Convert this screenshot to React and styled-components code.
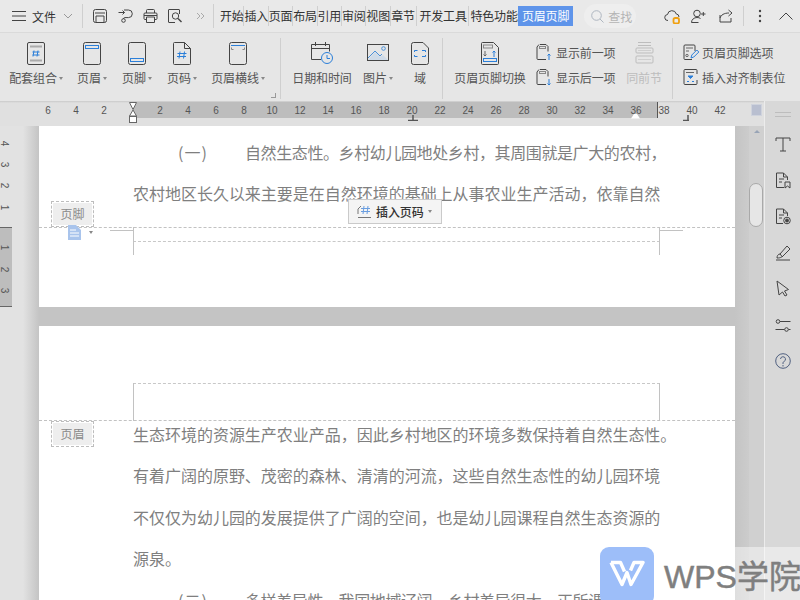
import React from "react";
import styled, { createGlobalStyle } from "styled-components";

const Global = createGlobalStyle`
  html, body { margin: 0; padding: 0; background: #e2e2e2; }
  * { box-sizing: border-box; }
  #root { width: 800px; height: 600px; overflow: hidden; }
`;
const Shell = styled.div`
  position: relative; width: 800px; height: 600px; overflow: hidden; display: flex; flex-direction: column;
  font-family: "Noto Sans CJK SC", "Noto Sans", sans-serif; color: #444; background: #e2e2e2;
`;
/* ---- title bar ---- */
const TitleBar = styled.div`
  height: 33px; flex: none; display: flex; align-items: center; background: #e9e9e9; border-bottom: 1px solid #dadada; padding-left: 12px;
`;
const FileLabel = styled.span`font-size: 12px; color: #333; margin-left: 6px; width: 31px;`;
const VSep = styled.div`width: 1px; height: ${p => p.$h || 24}px; background: ${p => p.$c || "#cfcfcf"}; margin: 0 ${p => p.$mr || 0}px 0 ${p => p.$ml || 0}px; flex: none;`;
const QuickIcon = styled.span`display: flex; width: ${p => p.$w || 25}px; justify-content: center; flex: none;`;
const TabRow = styled.div`display: flex; align-items: center; height: 24px; margin-left: 6px;`;
const Tab = styled.span`
  font-size: 12px; line-height: 20px; color: #333; white-space: nowrap; text-align: center; width: ${p => p.$w}px; flex: none;
  border-right: ${p => p.$sep ? "1px solid #cfcfcf" : "none"};
  letter-spacing: -0.2px;
`;
const ActiveTab = styled.span`
  width: 55px; height: 20px; line-height: 20px; text-align: center; font-size: 12px; color: #fff; background: #5e94ea; flex: none; letter-spacing: -0.2px;
`;
const Search = styled.div`
  display: flex; align-items: center; gap: 4px; width: 52px; height: 24px; margin-left: 11px; border-radius: 12px; background: #eeeeee; padding-left: 7px;
  font-size: 12px; color: #b4b4b4; flex: none; white-space: nowrap;
`;
const RightIcons = styled.div`display: flex; align-items: center; margin-left: 28px;`;

/* ---- ribbon ---- */
const Ribbon = styled.div`
  height: 68px; flex: none; display: flex; align-items: stretch; background: #e6e6e6; padding: 4px 0 2px 7px; position: relative;
`;
const RibbonBtn = styled.div`
  width: ${p => p.$w}px; flex: none; display: flex; flex-direction: column; align-items: center; 
  font-size: 12px; color: ${p => p.$off ? "#bdbdbd" : "#555"}; white-space: nowrap; letter-spacing: -0.1px;
`;
const IconSlot = styled.div`height: 30px; margin-top: 1px; display: flex; align-items: center; justify-content: center;`;
const BtnLabel = styled.div`margin-top: 1px; line-height: 18px; display: flex; align-items: center; gap: 2px;`;
const Caret = styled.i`
  display: inline-block; width: 0; height: 0; border-left: 2.5px solid transparent; border-right: 2.5px solid transparent; border-top: 3px solid #888;
  margin-left: ${p => p.$ml || 0}px; margin-bottom: ${p => p.$mb || 0}px;
`;
const RibbonSep = styled.div`width: 1px; background: #cfcfcf; flex: none; margin: 1px ${p => p.$r || 0}px 0 ${p => p.$l || 0}px;`;
const SmallCol = styled.div`display: flex; flex-direction: column; gap: 5px; padding-top: 5px; width: ${p => p.$w}px; flex: none; margin-left: ${p => p.$ml || 0}px;`;
const SmallItem = styled.div`display: flex; align-items: center; gap: 3px; height: 20px; font-size: 12px; color: #555; white-space: nowrap; letter-spacing: -0.1px;`;
const Launcher = styled.span`position: absolute; left: 271px; top: 60px; width: 5px; height: 5px; border-right: 1px solid #999; border-bottom: 1px solid #999;`;

/* ---- ruler ---- */
const Ruler = styled.div`
  height: 25px; flex: none; position: relative; display: flex; padding-left: 34px; padding-top: 1px;
  background: linear-gradient(#c9c9c9, #e0e0e0 2px, #e0e0e0 100%);
  background-color: #e2e2e2;
`;
const RulerBand = styled.div`
  position: absolute; left: 133px; top: 1px; width: 525px; height: 16px; background: #bdbdbd; border-right: 1px solid #555;
`;
const RulerNum = styled.span`
  position: relative; width: 28px; flex: none; text-align: center; font-size: 10px; line-height: 17px; color: #555;
  font-family: "Liberation Sans", sans-serif;
`;
const Marker = styled.span`position: absolute; left: ${p => p.$x}px; top: ${p => p.$y}px; display: block; line-height: 0;`;
const RulerBtn = styled.span`position: absolute; left: 751px; top: 3px; width: 11px; height: 12px; background: #b9bfd0; border: 1px solid #cfd3dd;`;

/* ---- main ---- */
const Main = styled.div`flex: 1; display: flex; min-height: 0;`;
const VRuler = styled.div`width: 12px; flex: none; display: flex; flex-direction: column; padding-top: 6.500px; background: #e2e2e2; height: 100%;`;
const VCell = styled.div`
  height: 21.400px; flex: none; font-size: 10px; line-height: 21px; text-align: center; color: #555; font-family: "Liberation Sans", sans-serif;
  display: flex; align-items: center; justify-content: center; padding-right: 2px;
  & > span { transform: rotate(90deg); display: block; }
`;
const VDark = styled.div`
  background: #bdbdbd; border-top: 1px solid #666; border-bottom: 1px solid #666; height: 80px; margin-top: 8.900px; padding-top: 9px; flex: none;
`;
const Canvas = styled.div`
  flex: none; width: 737px; display: flex; flex-direction: column; overflow: hidden;
  background: linear-gradient(90deg, #e2e2e2 0, #e2e2e2 11px, #c4c4c4 27px, #c4c4c4 723px, #cccccc 737px);
  padding-left: 27px; padding-right: 14px;
`;
const Page = styled.div`
  position: relative; background: #fff; flex: none; height: ${p => p.$h}px; padding: ${p => p.$pt}px 75px 0 94px;
`;
const PageGap = styled.div`height: 19px; flex: none;`;
const Para = styled.p`
  margin: 0; font-size: 16px; line-height: 41.4px; color: #7f7f7f; white-space: nowrap;
  letter-spacing: ${p => p.$tight ? "-0.4px" : "-0.02px"};
  text-indent: ${p => p.$indent || 0}px;
`;
const Ordinal = styled.span`display: inline-block; width: 67px; text-indent: 0; letter-spacing: 1px;`;
const DashLine = styled.div`position: absolute; left: 0; right: 0; top: ${p => p.$y}px; border-top: 1px dashed #c2c2c2;`;
const InnerDash = styled.div`position: absolute; left: 94px; width: 527px; top: ${p => p.$y}px; border-top: 1px dashed #c8c8c8;`;
const CornerV = styled.div`position: absolute; left: ${p => p.$x}px; top: ${p => p.$y}px; height: ${p => p.$h}px; width: 1px; background: #c2c2c2;`;
const CornerH = styled.div`position: absolute; left: ${p => p.$x}px; top: ${p => p.$y}px; width: 24px; height: 1px; background: #c2c2c2;`;
const ZoneTag = styled.div`
  position: absolute; left: 12px; top: ${p => p.$y}px; width: 43px; height: 26px; border: 1px dashed #bdbdbd; padding: 1px;
  & > span { display: block; background: #eeeeee; height: 22px; line-height: 21px; text-align: center; font-size: 12px; color: #8a8a8a; }
`;
const InsertBtn = styled.div`
  position: absolute; left: 309px; top: 73px; width: 94px; height: 25px; background: #f4f4f4; border: 1px solid #cacaca;
  display: flex; align-items: center; gap: 3px; padding-left: 8px; font-size: 12px; font-weight: 500; color: #333; white-space: nowrap; letter-spacing: -0.1px;
`;
const FootIcon = styled.span`position: absolute; left: 29px; top: 99px; line-height: 0; display: flex; align-items: flex-end; gap: 8px;`;

const Scroll = styled.div`width: 15px; flex: none; background: #d0d0d0; position: relative; display: flex; justify-content: center; padding-top: 4px;`;
const Thumb = styled.div`position: absolute; left: 0; top: 57px; width: 14px; height: 44px; border-radius: 7px; background: #e6e6e6; border: 1px solid #a9a9a9;`;
const UpArrow = styled.i`width: 0; height: 0; border-left: 3px solid transparent; border-right: 3px solid transparent; border-bottom: 3px solid #98a4b6;`;
const Side = styled.div`
  width: 36px; flex: none; background: #d8d8d8; border-left: 1px solid #ececec; margin-top: -25px; z-index: 1; display: flex; flex-direction: column; align-items: center; position: relative; height: 500px; padding-top: 11px;
`;
const Grip = styled.div`width: 16px; height: 5px; border-top: 1px solid #bdbdbd; border-bottom: 1px solid #bdbdbd;`;
const SideIcon = styled.div`height: 36.2px; display: flex; align-items: center; justify-content: center; flex: none;`;
const SideIcons = styled.div`display: flex; flex-direction: column; margin-top: 9px;`;

/* ---- watermark ---- */
const WatermarkShade = styled.div`position: absolute; left: 735px; right: 0; bottom: 0; height: 53px; background: rgba(255,255,255,.45); z-index: 2;`;
const Watermark = styled.div`
  position: absolute; left: 600px; top: 547px; display: flex; align-items: center; gap: 10px; z-index: 3; height: 53px; white-space: nowrap;
`;
const LogoBox = styled.div`width: 54px; height: 58px; border-radius: 9px; background: #9dbef9; display: flex; align-items: center; justify-content: center; flex: none; padding-bottom: 5px; margin-bottom: -5px;`;
const WmText = styled.span`font-family: "Liberation Sans", "Noto Sans CJK SC", sans-serif; font-size: 32px; color: #7f7f7f; font-weight: 400; -webkit-text-stroke: .5px #7f7f7f; letter-spacing: 0;`;

/* icons */
const S = ({ w = 16, h = 16, vb, children, ...r }) => (
  <svg width={w} height={h} viewBox={vb || `0 0 ${w} ${h}`} fill="none" stroke="#444" strokeWidth="1" {...r}>{children}</svg>
);
const B = "#2b7fd9";
const Doc = ({ children, w = 20, h = 23 }) => (
  <S w={w} h={h}><path d={`M1.5 2.5a2 2 0 0 1 2-2h${w - 7}a2 2 0 0 1 2 2v${h - 5}a2 2 0 0 1-2 2h-${w - 7}a2 2 0 0 1-2-2z`} />{children}</S>
);

const tabs = ["开始", "插入", "页面", "布局", "引用", "审阅", "视图", "章节"];
const hNums = [6, 4, 2, "", 2, 4, 6, 8, 10, 12, 14, 16, 18, 20, 22, 24, 26, 28, 30, 32, 34, 36, 38, 40, 42];

export default function App() {
  return (
    <Shell>
      <Global />
      <TitleBar>
        <S w={14} h={12}><path d="M0 1.5h14M0 6h14M0 10.5h14" /></S>
        <FileLabel>文件</FileLabel>
        <S w={10} h={6} stroke="#999"><path d="M1 1l4 4 4-4" /></S>
        <VSep $ml={9} $mr={5} $h={24} />
        <QuickIcon $w={24}><S w={14} h={14}><path d="M.5 2.500a2 2 0 0 1 2-2h9a2 2 0 0 1 2 2v9a2 2 0 0 1-2 2h-9a2 2 0 0 1-2-2zM2 4h10M3 13.500V7h8v6.500" /></S></QuickIcon>
        <QuickIcon $w={26}><S w={15} h={14}><path d="M.5 3.500h6M4.500 1.500l2 2-2 2M6 1h4.500a3.800 3.800 0 0 1 0 7.600H6.500c-.6 0-1 .6-1 1.400" /><circle cx="5.500" cy="11.500" r="1.800" /></S></QuickIcon>
        <QuickIcon $w={24}><S w={15} h={14}><path d="M3.500 4V1.500a1 1 0 0 1 1-1h6a1 1 0 0 1 1 1V4M3.500 10.500H2a1 1 0 0 1-1-1V5a1 1 0 0 1 1-1h11a1 1 0 0 1 1 1v4.500a1 1 0 0 1-1 1h-1.500M3.500 8h8v5.500h-8zM1 6.500h13" /></S></QuickIcon>
        <QuickIcon $w={26}><S w={15} h={14}><path d="M11.500 5V1a.5.5 0 0 0-.5-.5H1a.5.5 0 0 0-.5.5v12a.5.5 0 0 0 .5.500h6" /><circle cx="7.500" cy="7" r="3.200" /><path d="M10 9.500l3.500 3.500" strokeWidth="1.400" /></S></QuickIcon>
        <QuickIcon $w={24}><S w={9} h={8} stroke="#aaa"><path d="M1 1l3 3-3 3M5 1l3 3-3 3" /></S></QuickIcon>
        <VSep $h={24} $ml={1} />
        <TabRow>
          {tabs.map((t, i) => <Tab key={i} $w={24.4} $sep={i < tabs.length - 1}>{t}</Tab>)}
          <VSep $h={20} $ml={1} $mr={2} />
          <Tab $w={48}>开发工具</Tab>
          <VSep $h={20} $ml={1} $mr={1} />
          <Tab $w={48}>特色功能</Tab>
          <ActiveTab>页眉页脚</ActiveTab>
        </TabRow>
        <Search>
          <S w={13} h={13} stroke="#aeb6c0"><circle cx="5.500" cy="5.500" r="4.800" /><path d="M9 9l3.500 3.500" /></S>
          <span>查找</span>
        </Search>
        <RightIcons>
          <QuickIcon $w={17}>
            <S w={17} h={15}><path d="M4 11.500a3 3 0 0 1-.5-6 4.500 4.500 0 0 1 8.800-.5 3 3 0 0 1 2.700 3" /><rect x="9.500" y="9" width="5.500" height="5.500" rx="1.800" stroke="#f0a010" strokeWidth="1.800" /></S>
          </QuickIcon>
          <QuickIcon $w={34}>
            <S w={15} h={15}><circle cx="6" cy="4.500" r="3.300" /><path d="M.5 13.500c0-3 2.500-5 5.500-5 1.500 0 2.500.3 3.500 1M.5 13.500h7M10 5h4.500M12.300 3v4" /></S>
          </QuickIcon>
          <QuickIcon $w={22}>
            <S w={15} h={14}><path d="M1 6v7h11V9M1 9c1-3 4-5 9-5M9.500 1l3.500 3-3.500 3" /></S>
          </QuickIcon>
          <VSep $h={20} $ml={6} />
          <QuickIcon $w={32}><S w={4} h={14} fill="#444" stroke="none"><circle cx="2" cy="2" r="1.200" /><circle cx="2" cy="7" r="1.200" /><circle cx="2" cy="12" r="1.200" /></S></QuickIcon>
          <QuickIcon $w={20}><S w={14} h={8}><path d="M.5 7.500L7 1l6.500 6.500" /></S></QuickIcon>
        </RightIcons>
      </TitleBar>

      <Ribbon>
        <RibbonBtn $w={58}>
          <IconSlot><S w={20} h={23}><path d="M1.500 2a1.500 1.500 0 0 1 1.500-1.500h14a1.500 1.500 0 0 1 1.500 1.500v19a1.500 1.500 0 0 1-1.500 1.500h-14a1.500 1.500 0 0 1-1.500-1.500z" /><path d="M4 4.500h12M4 18.500h12" stroke="#aaa" strokeWidth="2" /><path d="M8 8.500l-1 6M12 8.500l-1 6M6.500 10h7M6.500 13h7" stroke={B} /></S></IconSlot>
          <BtnLabel>配套组合<Caret /></BtnLabel>
        </RibbonBtn>
        <RibbonBtn $w={54}>
          <IconSlot><Doc><rect x="3.500" y="3.500" width="13" height="3" stroke={B} /></Doc></IconSlot>
          <BtnLabel>页眉<Caret /></BtnLabel>
        </RibbonBtn>
        <RibbonBtn $w={36}>
          <IconSlot><Doc><rect x="3.500" y="16.500" width="13" height="3" stroke={B} /></Doc></IconSlot>
          <BtnLabel>页脚<Caret /></BtnLabel>
        </RibbonBtn>
        <RibbonBtn $w={54}>
          <IconSlot><S w={20} h={23}><path d="M1.500 1.500a1 1 0 0 1 1-1h10l6 6v15a1 1 0 0 1-1 1h-15a1 1 0 0 1-1-1zM12.500.5v6h6" /><path d="M8 9.500l-1 7M12.500 9.500l-1 7M5.500 11.500h9M5 14.500h9" stroke={B} /></S></IconSlot>
          <BtnLabel>页码<Caret /></BtnLabel>
        </RibbonBtn>
        <RibbonBtn $w={58}>
          <IconSlot><Doc><path d="M3 3.500h14" stroke={B} /><path d="M3.500 5.500v2h2M16.500 5.500v2h-2" stroke="#888" /></Doc></IconSlot>
          <BtnLabel>页眉横线<Caret /></BtnLabel>
        </RibbonBtn>
        <Launcher />
        <RibbonSep $l={13} $r={11} />
        <RibbonBtn $w={60}>
          <IconSlot><S w={24} h={24}><path d="M11 18.500H1.500v-15h18v7M1.500 7.500h18M5.500 1v4M15.500 1v4" /><circle cx="17" cy="17" r="5.500" stroke={B} /><path d="M17 14v3.500h3" stroke={B} /></S></IconSlot>
          <BtnLabel>日期和时间</BtnLabel>
        </RibbonBtn>
        <RibbonBtn $w={52}>
          <IconSlot><S w={23} h={20}><rect x=".5" y="1.500" width="21" height="16" /><path d="M1 17l7-8 5 5 3-2 5 5z" fill="#cfdbe8" stroke="none" /><path d="M1 15l7-7 5 5 2-2" stroke="#4a90d9" /><circle cx="16.500" cy="5.500" r="1.800" stroke="#4a90d9" /></S></IconSlot>
          <BtnLabel>图片<Caret /></BtnLabel>
        </RibbonBtn>
        <RibbonBtn $w={32}>
          <IconSlot><S w={20} h={23}><path d="M1.500 2.500a2 2 0 0 1 2-2h9.500l5.500 5.500v14.500a2 2 0 0 1-2 2h-13a2 2 0 0 1-2-2z" /><path d="M4.500 10v-1.500h3M12 8.500h3.500v1.500M4.500 13v1.500h3M12 14.500h3.500v-1.500" stroke={B} /></S></IconSlot>
          <BtnLabel>域</BtnLabel>
        </RibbonBtn>
        <RibbonSep $l={6} $r={8} />
        <RibbonBtn $w={78}>
          <IconSlot><S w={20} h={23}><path d="M1.500 1.500a1 1 0 0 1 1-1h11l5 5v16a1 1 0 0 1-1 1h-15a1 1 0 0 1-1-1z" /><rect x="3.500" y="3" width="9" height="3" stroke="#888" /><path d="M5 9v5M3.500 12.500L5 14l1.500-1.500" stroke="#666" /><path d="M14 15v-6M12.500 10.500L14 9l1.500 1.500" stroke={B} /><rect x="3.500" y="16.500" width="13" height="3" stroke={B} /></S></IconSlot>
          <BtnLabel>页眉页脚切换</BtnLabel>
        </RibbonBtn>
        <SmallCol $w={88} $ml={7}>
          <SmallItem>
            <S w={17} h={17}><path d="M4 .5h6l2 2v5M1 3V14.500a1 1 0 0 0 1 1h8M1 3l2-2.500" /><rect x="3.500" y="2.500" width="6" height="2" stroke="#888" /><path d="M13 16v-6M11.500 11.500L13 10l1.500 1.500" stroke={B} /></S>
            显示前一项
          </SmallItem>
          <SmallItem>
            <S w={17} h={17}><path d="M4 .5h6l2 2v5M1 3V14.500a1 1 0 0 0 1 1h8M1 3l2-2.500" /><rect x="3.500" y="2.500" width="6" height="2" stroke="#888" /><path d="M13 10v6M11.500 14.500L13 16l1.500-1.500" stroke={B} /></S>
            显示后一项
          </SmallItem>
        </SmallCol>
        <RibbonBtn $w={40} $off>
          <IconSlot><S w={19} h={23} stroke="#bdbdbd"><path d="M3 .5h13M3 3.500h13" /><rect x="1" y="6" width="17" height="5" rx="1" /><rect x="1" y="14" width="17" height="7" rx="1" /><path d="M3 8.500h13M3 17.500h13" stroke="#cfcfcf" /></S></IconSlot>
          <BtnLabel>同前节</BtnLabel>
        </RibbonBtn>
        <RibbonSep $l={8} $r={10} />
        <SmallCol $w={112}>
          <SmallItem>
            <S w={16} h={17}><path d="M12 7V2a1 1 0 0 0-1-1H2a1 1 0 0 0-1 1v12.500a1 1 0 0 0 1 1h7" /><path d="M3 4h7M3 7h3" stroke="#666" /><circle cx="4" cy="11.500" r="1.200" stroke="#666" /><path d="M8 14l.8-3 5-5 2 2-5 5z" stroke={B} /></S>
            页眉页脚选项
          </SmallItem>
          <SmallItem>
            <S w={16} h={17}><path d="M14 5V1.500a1 1 0 0 0-1-1H2a1 1 0 0 0-1 1v13a1 1 0 0 0 1 1h11a1 1 0 0 0 1-1V11" /><path d="M3 3.500h8" stroke="#666" /><path d="M5 7h5l-2.500 2.500z" fill={B} stroke={B} /><path d="M4 12.500h2M9 12.500h2" stroke={B} /></S>
            插入对齐制表位
          </SmallItem>
        </SmallCol>
      </Ribbon>

      <Ruler>
        <RulerBand />
        {hNums.map((n, i) => <RulerNum key={i}>{n}</RulerNum>)}
        <Marker $x={129} $y={1}><svg width="8" height="22" fill="#fff" stroke="#666"><path d="M.5.500h7L4 7.500zM4 8L.5 14h7z" /><rect x=".5" y="14.500" width="7" height="6" /></svg></Marker>
        <Marker $x={408} $y={13}><svg width="10" height="6" stroke="#555" fill="none"><path d="M0 5.500h10M5 0v5" strokeWidth="1.500" /></svg></Marker>
        <Marker $x={631} $y={11}><svg width="9" height="6" fill="#fff"><path d="M0 5.500L3 1h3l3 4.500z" /></svg></Marker>
        <Marker $x={683} $y={13}><svg width="6" height="6" stroke="#555" fill="none"><path d="M0 5.500h6M5 0v5" strokeWidth="1.500" /></svg></Marker>
        <RulerBtn />
      </Ruler>

      <Main>
        <VRuler>
          {[4, 3, 2, 1].map(n => <VCell key={n}><span>{n}</span></VCell>)}
          <VDark>{[1, 2, 3].map(n => <VCell key={n}><span>{n}</span></VCell>)}</VDark>
        </VRuler>
        <Canvas>
          <Page $h={181} $pt={6}>
            <Para $indent={45} $tight><Ordinal>(一)</Ordinal>自然生态性。乡村幼儿园地处乡村，其周围就是广大的农村，</Para>
            <Para>农村地区长久以来主要是在自然环境的基础上从事农业生产活动，依靠自然</Para>
            <DashLine $y={101} />
            <InnerDash $y={115} />
            <CornerV $x={94} $y={101} $h={28} />
            <CornerV $x={620} $y={101} $h={28} />
            <CornerH $x={71} $y={104} />
            <CornerH $x={620} $y={104} />
            <ZoneTag $y={75}><span>页脚</span></ZoneTag>
            <FootIcon>
              <svg width="13" height="15"><path d="M0 0h8l5 5v10H0z" fill="#a9c4ec" /><path d="M2 5h6M2 8h9M2 11h9" stroke="#fff" /></svg>
              <Caret $mb={6} />
            </FootIcon>
            <InsertBtn>
              <svg width="16" height="14" fill="none" stroke="#777"><path d="M1 9V4l3-3M1 12.500h13" /><path d="M7 1L6 9M11 1l-1 8M4 3.500h9M4 6.500h9" stroke="#6a9ee0" /></svg>
              插入页码<Caret $ml={1} />
            </InsertBtn>
          </Page>
          <PageGap />
          <Page $h={400} $pt={88}>
            <Para>生态环境的资源生产农业产品，因此乡村地区的环境多数保持着自然生态性。</Para>
            <Para>有着广阔的原野、茂密的森林、清清的河流，这些自然生态性的幼儿园环境</Para>
            <Para>不仅仅为幼儿园的发展提供了广阔的空间，也是幼儿园课程自然生态资源的</Para>
            <Para>源泉。</Para>
            <Para $indent={45} $tight><Ordinal>(二)</Ordinal>多样差异性。我国地域辽阔，乡村差异很大，正所谓“十里</Para>
            <DashLine $y={94} />
            <InnerDash $y={57} />
            <CornerV $x={94} $y={57} $h={38} />
            <CornerV $x={620} $y={57} $h={38} />
            <ZoneTag $y={95}><span>页眉</span></ZoneTag>
          </Page>
        </Canvas>
        <Scroll>
          <UpArrow />
          <Thumb />
        </Scroll>
        <Side>
          <Grip />
          <SideIcons>
            <SideIcon><S w={16} h={15}><path d="M1 4V1h14v3M8 1v13M5 14h6" /></S></SideIcon>
            <SideIcon><S w={16} h={17}><path d="M9 15.500H1.500V1h7l4 4v3M8.500 1v4h4M4 7h5M4 10h3" /><path d="M10 10h5v6l-2.500-2-2.500 2z" /></S></SideIcon>
            <SideIcon><S w={16} h={17}><path d="M8 15.500H1.500V1h7l4 4v3M8.500 1v4h4M4 7h5M4 10h3" /><circle cx="12" cy="12.500" r="3.300" /><circle cx="12" cy="12.500" r="1.500" fill="#444" /></S></SideIcon>
            <SideIcon><S w={16} h={16}><path d="M1 15h14M2 13c0-2 1-4 3-4l7-8 3 3-8 8c-1 0-1 1-5 1zM5 9l2.500 3" /></S></SideIcon>
            <SideIcon><S w={14} h={17}><path d="M1 1l11.500 8.500-4 1.500 2.500 4-2 1-2.500-4L3 15z" /></S></SideIcon>
            <SideIcon><S w={16} h={13}><circle cx="3" cy="2.500" r="1.800" /><path d="M5 2.500h10.500M.5 10.500h9" /><circle cx="11.500" cy="10.500" r="1.800" /><path d="M13.500 10.500h2" /></S></SideIcon>
            <SideIcon><S w={16} h={16} stroke="#506080"><circle cx="8" cy="8" r="7.300" /><path d="M5.500 6a2.500 2.500 0 1 1 3.500 2.500c-1 .5-1 1-1 2.500M8 12v1.500" /></S></SideIcon>
          </SideIcons>
        </Side>
      </Main>

      <WatermarkShade />
      <Watermark>
        <LogoBox>
          <svg width="36" height="27" viewBox="0 0 36 27" fill="none" stroke="#fff" strokeWidth="3.400" strokeLinejoin="round"><path d="M2 2.500h9.500l4 9" /><path d="M2 2.500L13 24.500l5-12 4 12L34 2.500h-9l-3.500 8" /></svg>
        </LogoBox>
        <WmText>WPS学院</WmText>
      </Watermark>
    </Shell>
  );
}
